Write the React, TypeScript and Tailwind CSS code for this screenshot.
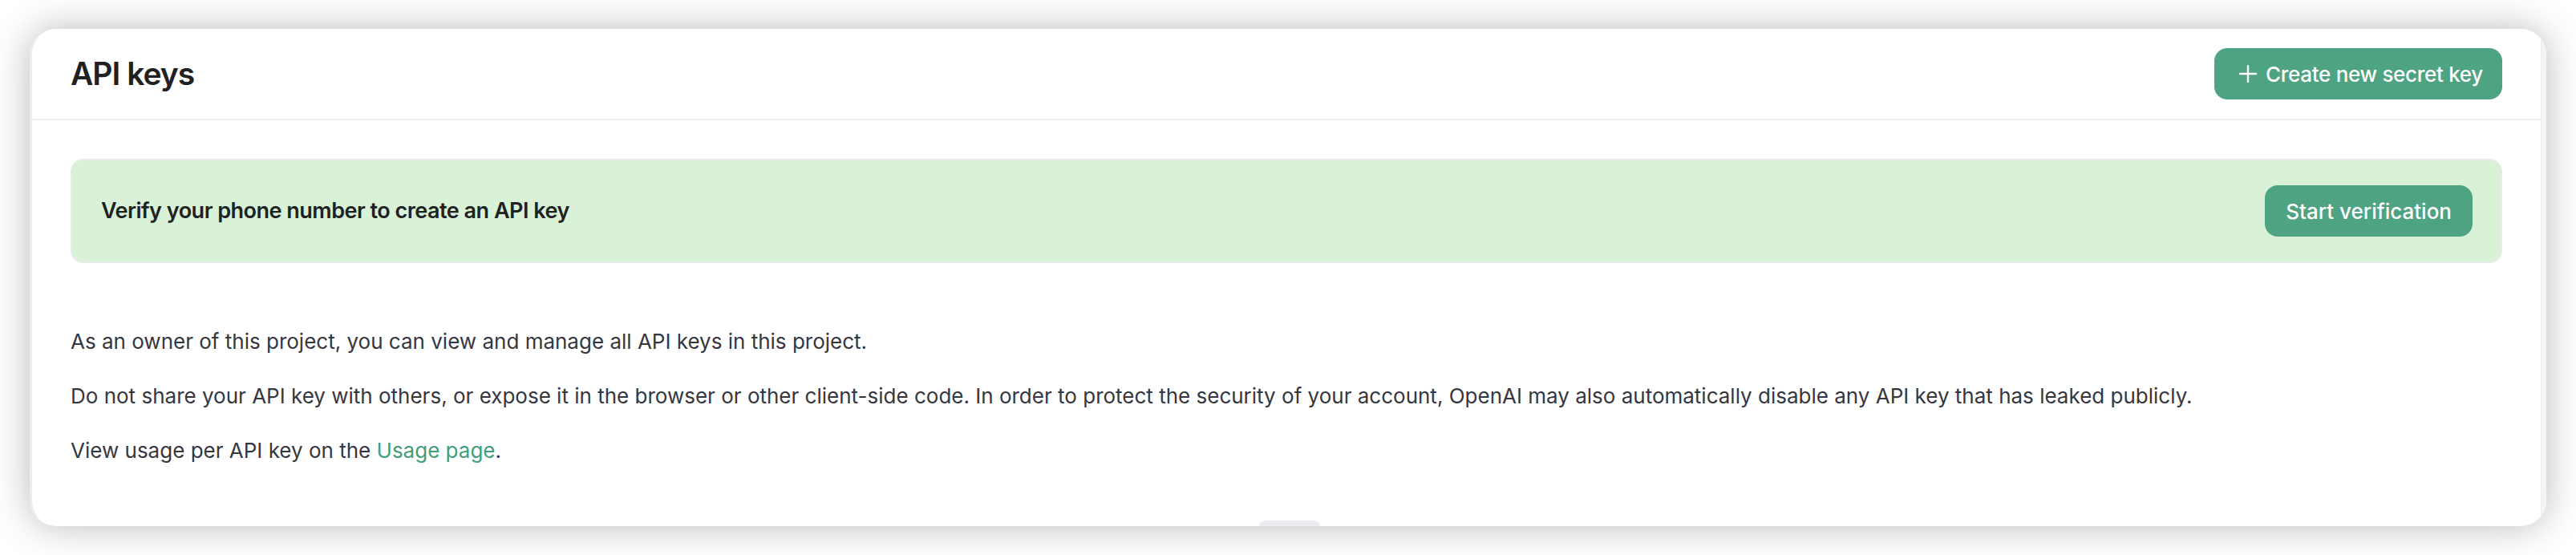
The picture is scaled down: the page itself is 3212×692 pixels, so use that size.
import { Plus } from 'lucide-react';

const font = { fontFamily: 'Inter, "Noto Sans", sans-serif' };

export default function App() {
  return (
    <div className="w-[3212px] h-[692px] bg-white px-[37px] py-[36px]" style={font}>
      <div className="relative flex h-[620px] overflow-hidden rounded-[32px] border-l-[3px] border-[#ececf1] bg-white shadow-[0_0_48px_rgba(0,0,0,0.28)]">
        <div className="flex-1 flex flex-col">
          {/* Header */}
          <div className="flex items-center justify-between px-12 py-6 border-b-2 border-[#ececf1]">
            <h1 className="text-[39px] leading-[48px] font-semibold tracking-[-1px] text-[#202123]">API keys</h1>
            <button className="flex h-16 items-center gap-3 rounded-2xl bg-[#4ea383] pl-8 pr-6 text-[26px] font-medium tracking-[-0.3px] text-white">
              <Plus size={34} strokeWidth={1.7} className="-mx-[7px]" />
              Create new secret key
            </button>
          </div>

          {/* Body */}
          <div className="px-12 pt-12">
            <div className="flex h-[130px] items-center justify-between rounded-2xl border-2 border-[#e6ece6] bg-[#d9f2d7] pl-[36px] pr-[35px]">
              <p className="text-[27px] font-semibold text-[#202123] tracking-[-0.5px]">
                Verify your phone number to create an API key
              </p>
              <button className="flex h-16 items-center rounded-2xl bg-[#4ea383] px-[26px] text-[26px] font-medium text-white">
                Start verification
              </button>
            </div>

            <div className="mt-[78px] space-y-7 text-[26px] leading-10 text-[#353740]">
              <p>As an owner of this project, you can view and manage all API keys in this project.</p>
              <p>
                Do not share your API key with others, or expose it in the browser or other client-side code. In order to
                protect the security of your account, OpenAI may also automatically disable any API key that has leaked
                publicly.
              </p>
              <p>
                View usage per API key on the <span className="text-[#409e7b]">Usage page</span>.
              </p>
            </div>
          </div>
        </div>

        {/* scrollbar track */}
        <div className="w-[7px] border-l border-[#ececf1] bg-[#f4f4f6]" />

        {/* bottom handle */}
        <div className="absolute bottom-0 left-1/2 h-[7px] w-[76px] -translate-x-1/2 rounded-t-[8px] bg-[#ececf1]" />
      </div>
    </div>
  );
}
